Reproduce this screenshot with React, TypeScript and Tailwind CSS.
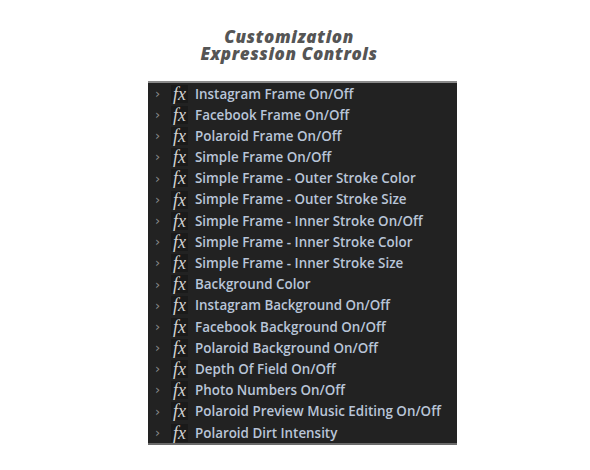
const items = [
  "Instagram Frame On/Off",
  "Facebook Frame On/Off",
  "Polaroid Frame On/Off",
  "Simple Frame On/Off",
  "Simple Frame - Outer Stroke Color",
  "Simple Frame - Outer Stroke Size",
  "Simple Frame - Inner Stroke On/Off",
  "Simple Frame - Inner Stroke Color",
  "Simple Frame - Inner Stroke Size",
  "Background Color",
  "Instagram Background On/Off",
  "Facebook Background On/Off",
  "Polaroid Background On/Off",
  "Depth Of Field On/Off",
  "Photo Numbers On/Off",
  "Polaroid Preview Music Editing On/Off",
  "Polaroid Dirt Intensity",
];

export default function App() {
  return (
    <div className="w-[590px] h-[470px] bg-white flex flex-col items-center">
      <p className="mt-[28px] mr-[12px] text-center text-[#555555] font-extrabold italic text-[17px] leading-[17px] tracking-[0.6px] font-['Open_Sans',sans-serif]">
        Customization
        <br />
        Expression Controls
      </p>
      <div className="mt-[19px] ml-[15px] w-[309px] bg-[#222222] border-t-2 border-t-[#8a8a8a] border-b-2 border-b-[#6a6a6a]">
        {items.map((label) => (
          <div key={label} className="h-[21.2px] flex items-center">
            <span className="ml-[7px] w-[10px] text-[#8a8a8a] text-[13px] font-['DejaVu_Sans',sans-serif]">›</span>
            <span className="ml-[6px] w-[17px] h-[18px] bg-[#1a1a1a] flex items-center justify-center text-[#d2d2d2] italic text-[18px] leading-none font-['Liberation_Serif',serif]">
              fx
            </span>
            <span className="ml-[7px] text-[#b9c5d8] text-[13.4px] font-semibold font-['Open_Sans',sans-serif] whitespace-nowrap">
              {label}
            </span>
          </div>
        ))}
      </div>
    </div>
  );
}
